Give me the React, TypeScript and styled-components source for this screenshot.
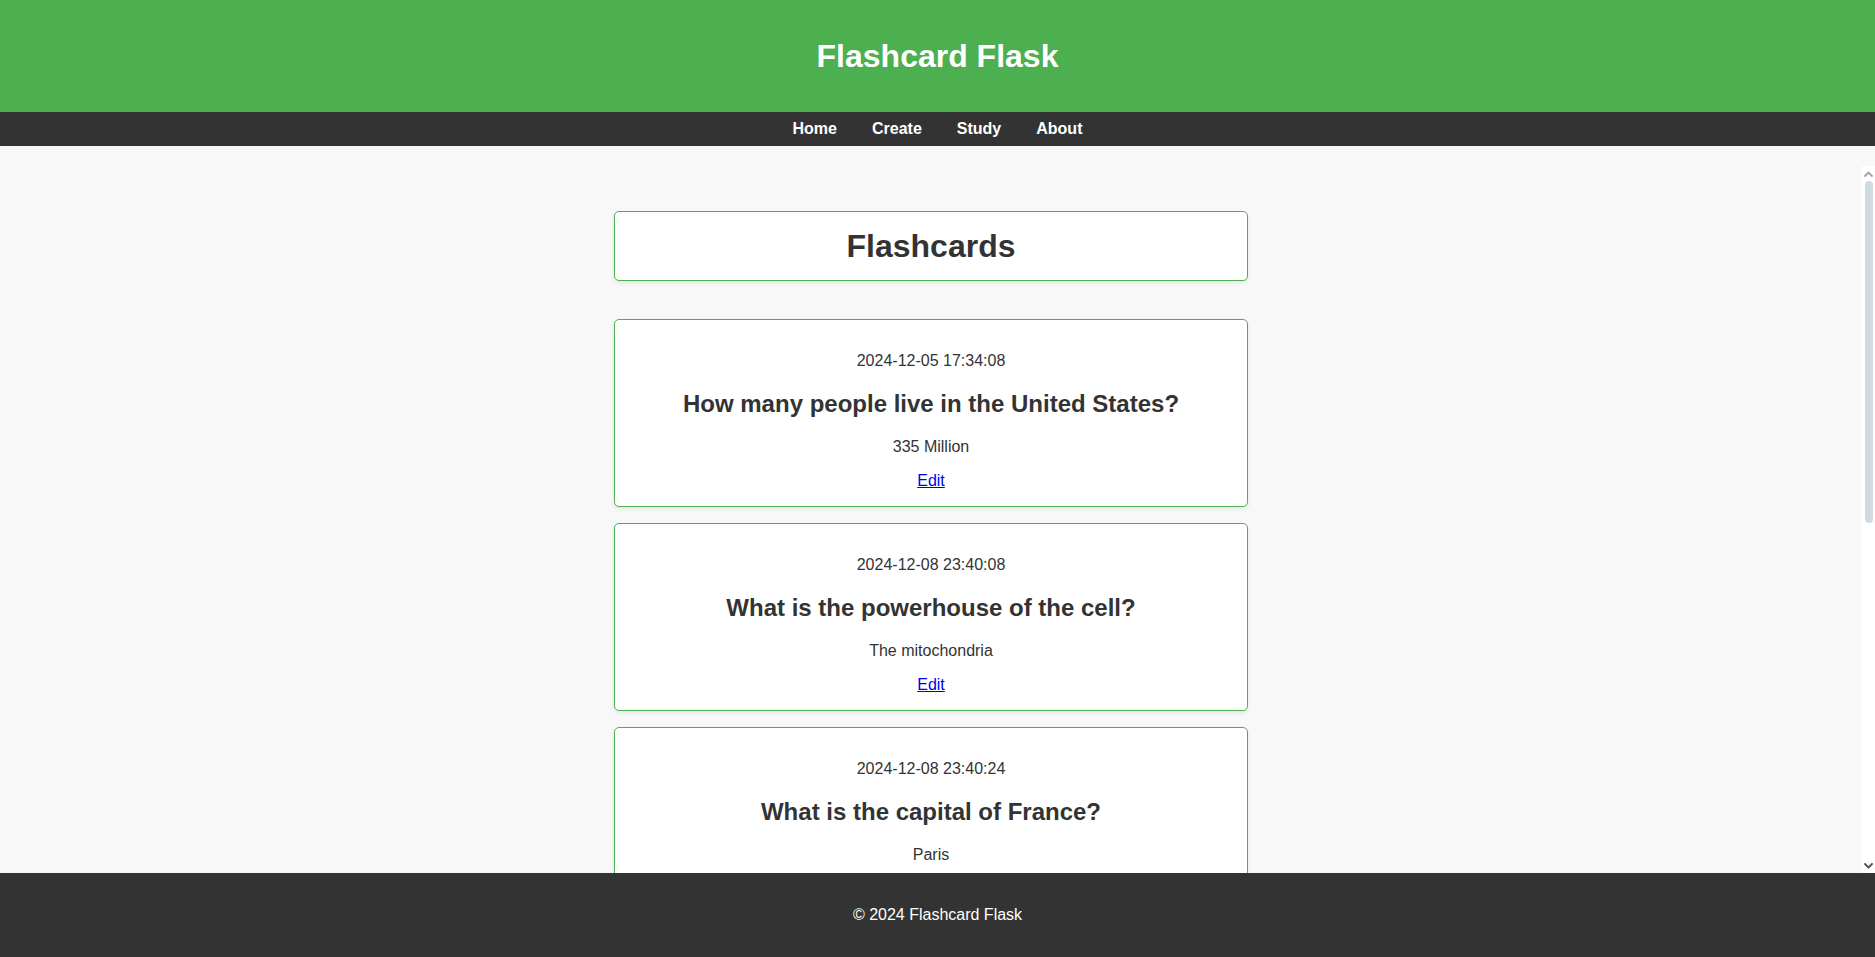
import React from "react";
import styled, { createGlobalStyle } from "styled-components";

const GlobalStyle = createGlobalStyle`
  html, body {
    margin: 0;
    padding: 0;
    height: 100%;
  }
  body {
    font-family: "Liberation Sans", Arial, sans-serif;
    background: #f8f8f8;
    color: #333;
  }
  #root {
    height: 100%;
  }
`;

const Page = styled.div`
  height: 100vh;
  display: flex;
  flex-direction: column;
  background: #f8f8f8;
`;

const Header = styled.header`
  background: #4caf50;
  color: #ffffff;
  text-align: center;
  padding: 16px 0;
  flex-shrink: 0;
`;

const SiteTitle = styled.h1`
  margin: 21px 0;
  font-size: 32px;
  line-height: 38px;
  font-weight: bold;
`;

const Nav = styled.nav`
  background: #333333;
  padding: 8px 0;
  display: flex;
  justify-content: center;
  gap: 35px;
  flex-shrink: 0;
`;

const NavLink = styled.a`
  color: #ffffff;
  font-size: 16px;
  line-height: 18px;
  font-weight: bold;
  text-decoration: none;
`;

const Main = styled.main`
  flex: 1;
  min-height: 0;
  margin-top: 20px;
  display: flex;
  background: #f8f8f8;
`;

const Scroller = styled.div`
  flex: 1;
  min-width: 0;
  overflow-y: auto;
  scrollbar-width: none;
  &::-webkit-scrollbar {
    display: none;
  }
`;

const Rail = styled.div`
  width: 13px;
  flex-shrink: 0;
  background: #ffffff;
  display: flex;
  flex-direction: column;
  align-items: center;
`;

const RailButton = styled.div`
  height: 15px;
  width: 100%;
  display: flex;
  align-items: center;
  justify-content: center;
  flex-shrink: 0;
`;

const RailTrack = styled.div`
  flex: 1;
  width: 100%;
  display: flex;
  flex-direction: column;
  align-items: center;
`;

const Thumb = styled.div`
  width: 8px;
  height: 342px;
  background: #cfdbe3;
  border-radius: 4px;
  margin-left: 1px;
`;

const Column = styled.div`
  width: 634px;
  margin: 0 auto;
  padding: 45px 0 45px;
  display: flex;
  flex-direction: column;
  gap: 16px;
`;

const Box = styled.section`
  background: #ffffff;
  border: 1px solid #4caf50;
  border-radius: 5px;
  box-shadow: 0 2px 4px rgba(0, 0, 0, 0.08);
  padding: 16px;
  text-align: center;
`;

const TitleBox = styled(Box)`
  margin-bottom: 22px;
`;

const PageTitle = styled.h1`
  margin: 0;
  font-size: 32px;
  line-height: 36px;
  font-weight: bold;
  color: #333;
`;

const DateLine = styled.p`
  margin: 16px 0;
  font-size: 16px;
  line-height: 18px;
`;

const Question = styled.h2`
  margin: 20px 0;
  font-size: 24px;
  line-height: 28px;
  font-weight: bold;
  color: #333;
`;

const Answer = styled.p`
  margin: 16px 0;
  font-size: 16px;
  line-height: 18px;
`;

const EditLink = styled.a`
  display: block;
  font-size: 16px;
  line-height: 18px;
  color: #0000ee;
  text-decoration: underline;
`;

const Footer = styled.footer`
  background: #333333;
  color: #ffffff;
  text-align: center;
  padding: 33px 0;
  font-size: 16px;
  line-height: 18px;
  flex-shrink: 0;
`;

const cards = [
  { date: "2024-12-05 17:34:08", q: "How many people live in the United States?", a: "335 Million" },
  { date: "2024-12-08 23:40:08", q: "What is the powerhouse of the cell?", a: "The mitochondria" },
  { date: "2024-12-08 23:40:24", q: "What is the capital of France?", a: "Paris" },
  { date: "2024-12-08 23:41:02", q: "What is the largest planet in our solar system?", a: "Jupiter" },
  { date: "2024-12-08 23:41:37", q: "Who wrote Romeo and Juliet?", a: "William Shakespeare" },
  { date: "2024-12-08 23:42:15", q: "What is the chemical symbol for water?", a: "H2O" },
];

const Chevron = ({ up, color }: { up?: boolean; color: string }) => (
  <svg width="9" height="6" viewBox="0 0 9 6">
    <path
      d={up ? "M1 5 L4.5 1.5 L8 5" : "M1 1 L4.5 4.5 L8 1"}
      fill="none"
      stroke={color}
      strokeWidth="1.8"
      strokeLinecap="round"
      strokeLinejoin="round"
    />
  </svg>
);

export default function App() {
  return (
    <>
      <GlobalStyle />
      <Page>
        <Header>
          <SiteTitle>Flashcard Flask</SiteTitle>
        </Header>
        <Nav>
          <NavLink href="#">Home</NavLink>
          <NavLink href="#">Create</NavLink>
          <NavLink href="#">Study</NavLink>
          <NavLink href="#">About</NavLink>
        </Nav>
        <Main>
          <Scroller>
            <Column>
              <TitleBox>
                <PageTitle>Flashcards</PageTitle>
              </TitleBox>
              {cards.map((c, i) => (
                <Box key={i}>
                  <DateLine>{c.date}</DateLine>
                  <Question>{c.q}</Question>
                  <Answer>{c.a}</Answer>
                  <EditLink href="#">Edit</EditLink>
                </Box>
              ))}
            </Column>
          </Scroller>
          <Rail aria-hidden="true">
            <RailButton>
              <Chevron up color="#a3a3a3" />
            </RailButton>
            <RailTrack>
              <Thumb />
            </RailTrack>
            <RailButton>
              <Chevron color="#505050" />
            </RailButton>
          </Rail>
        </Main>
        <Footer>© 2024 Flashcard Flask</Footer>
      </Page>
    </>
  );
}
